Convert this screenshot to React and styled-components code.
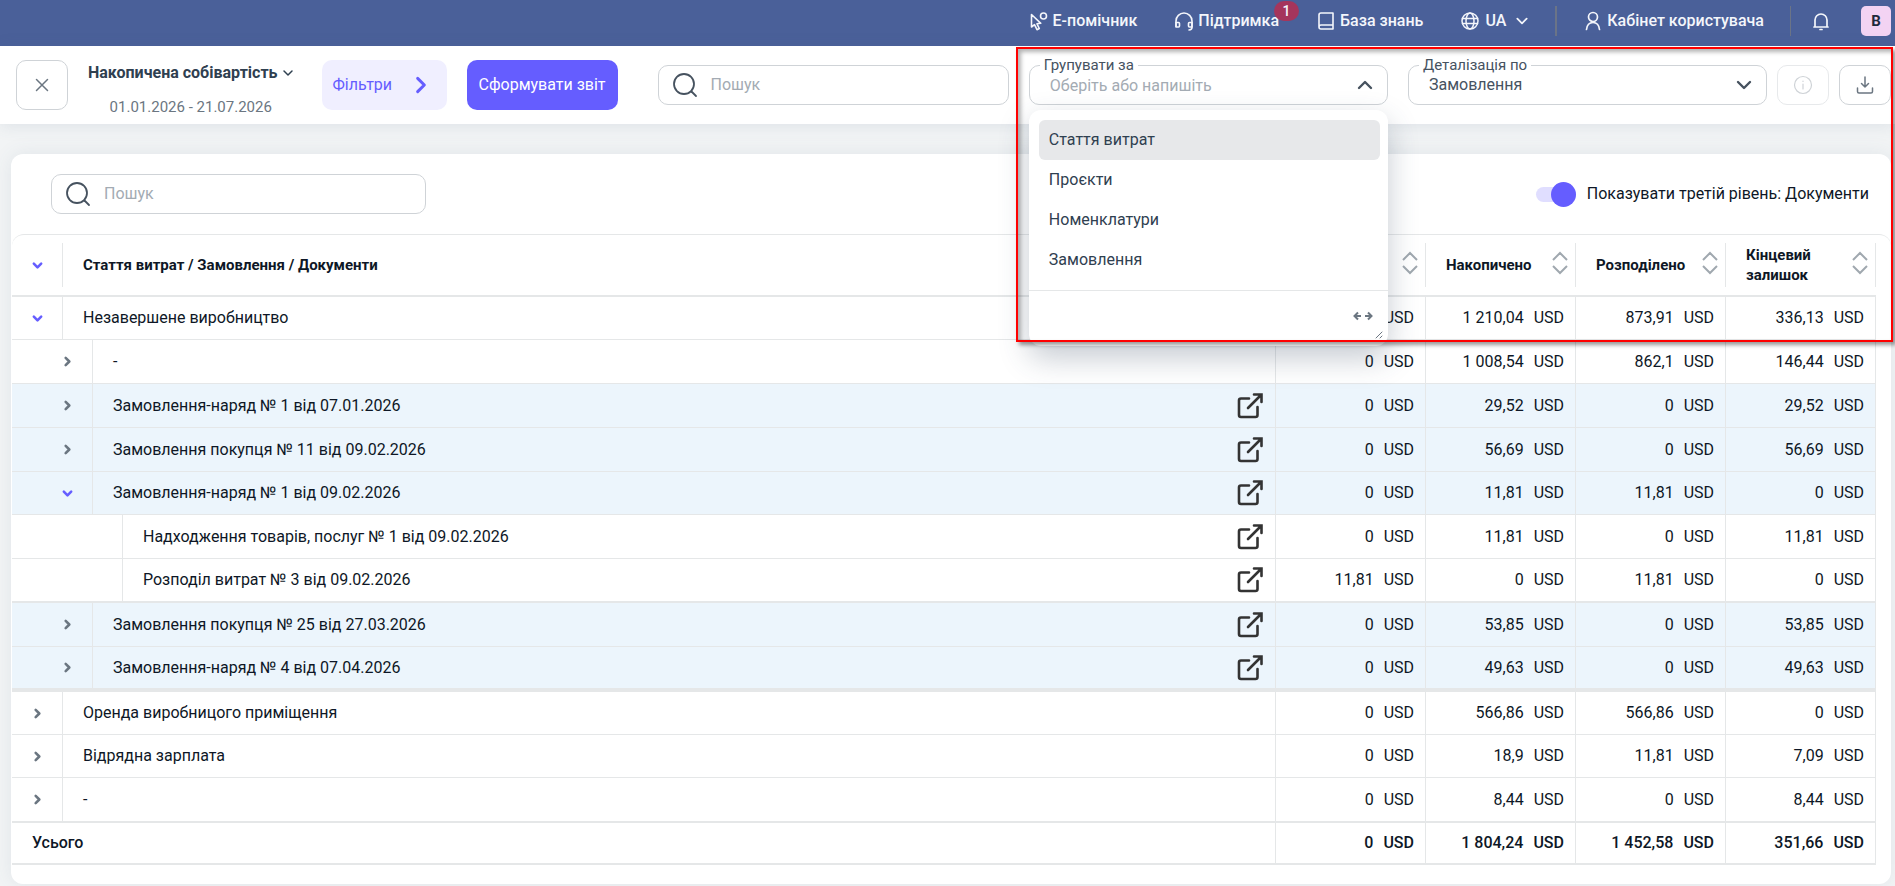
import React, { useState } from "react";
import styled, { createGlobalStyle, css } from "styled-components";

const colors = {
  brand: "#4a6099",
  primary: "#655dff",
  primaryLight: "#f0efff",
  text: "#0e1726",
  slate: "#2f4050",
  muted: "#6b7681",
  placeholder: "#a3abb3",
  border: "#cfd3d7",
  line: "#e5e7e8",
  highlight: "#ecf5fc",
};

const GlobalStyle = createGlobalStyle`
  * {
    box-sizing: border-box;
  }
  html, body, #root {
    min-height: 100vh;
  }
  body {
    margin: 0;
    overflow: hidden;
    background: #f2f4f5;
    color: ${colors.text};
    font: 16px/20px Roboto, "Liberation Sans", sans-serif;
  }
  button, input, select {
    font: inherit;
    color: inherit;
  }
  button {
    padding: 0;
    border: 0;
    background: none;
    cursor: pointer;
  }
  a {
    color: inherit;
    text-decoration: none;
  }
  svg {
    display: block;
    flex: none;
  }
`;

/* ---------- icons ---------- */

const Icon = ({ size = 20, width = 2, box = 24, children }) => (
  <svg
    width={size}
    height={size}
    viewBox={`0 0 ${box} ${box}`}
    fill="none"
    stroke="currentColor"
    strokeWidth={width}
    strokeLinecap="round"
    strokeLinejoin="round"
    aria-hidden="true"
  >
    {children}
  </svg>
);

const CursorIcon = () => (
  <Icon box={20} width={1.6}>
    <path d="M2.500 3.500v12.500l3-2.300 2.500 5 2.300-1.200-2.300-4.700 3.800-.5z" />
    <circle cx="14.500" cy="5" r="3" />
  </Icon>
);

const HeadsetIcon = () => (
  <Icon box={20} width={1.6}>
    <path d="M2 15.500V10a8 8 0 0 1 16 0v6a3 3 0 0 1-3 3" />
    <path d="M2 11.500h2.500a1 1 0 0 1 1 1v2.500a1 1 0 0 1-1 1H2zM18 11.500h-2.500a1 1 0 0 0-1 1v2.500a1 1 0 0 0 1 1H18z" />
  </Icon>
);

const BookIcon = () => (
  <Icon box={20} width={1.6}>
    <path d="M3 16V4a2 2 0 0 1 2-2h12v16H5a2 2 0 0 1-2-2zM3 16a2 2 0 0 1 2-2h12" />
  </Icon>
);

const GlobeIcon = () => (
  <Icon box={20} width={1.5}>
    <circle cx="10" cy="10" r="8" />
    <ellipse cx="10" cy="10" rx="4" ry="8" />
    <path d="M2.500 7.500h15M2.500 12.500h15" />
  </Icon>
);

const UserIcon = () => (
  <Icon box={20} width={1.7}>
    <circle cx="10" cy="6" r="4.500" />
    <path d="M3.500 18.500c.5-4.500 3-7 6.500-7s6 2.500 6.500 7" />
  </Icon>
);

const BellIcon = () => (
  <Icon box={20} width={1.7}>
    <path d="M3 16h14M4 16V9a6 6 0 0 1 12 0v7M9 18.500h2" />
  </Icon>
);

const SearchIcon = () => (
  <Icon size={26} box={26} width={1.8}>
    <circle cx="12" cy="12" r="10" />
    <path d="m19.500 19.500 4.500 4.500" />
  </Icon>
);

const Chevron = ({ dir = "down", size = 12, width = 2 }) => {
  const paths = {
    down: "m2 4 4 4 4-4",
    up: "m2 8 4-4 4 4",
    right: "m4 2 4 4-4 4",
  };
  return (
    <Icon size={size} box={12} width={width}>
      <path d={paths[dir]} />
    </Icon>
  );
};

const CloseIcon = () => (
  <Icon size={14} box={14} width={1.5}>
    <path d="m1.500 1.500 11 11M12.500 1.500l-11 11" />
  </Icon>
);

const InfoIcon = () => (
  <Icon size={20} box={20} width={1.2}>
    <circle cx="10" cy="10" r="8.500" />
    <path d="M10 9v5M10 6v.5" />
  </Icon>
);

const DownloadIcon = () => (
  <Icon size={18} box={18} width={1.5}>
    <path d="M9 1v10M5.500 7.500 9 11l3.500-3.500M1.500 12v3.500a1.500 1.500 0 0 0 1.500 1.500h12a1.500 1.500 0 0 0 1.500-1.500V12" />
  </Icon>
);

const ExternalIcon = () => (
  <Icon size={28} box={28} width={2.6}>
    <path d="M13 6.500H5a2 2 0 0 0-2 2V23a2 2 0 0 0 2 2h14.500a2 2 0 0 0 2-2v-8" />
    <path d="M12 16 24.500 3.500M18 2.500h7.500V10" strokeLinejoin="miter" />
  </Icon>
);

const SortIcon = () => (
  <svg width="16" height="24" viewBox="0 0 16 24" fill="none" stroke="#a0a8af" strokeWidth="2" aria-hidden="true">
    <path d="m1 9 7-7 7 7M1 15l7 7 7-7" />
  </svg>
);

const ResizeIcon = () => (
  <svg width="20" height="10" viewBox="0 0 20 10" fill="none" stroke="currentColor" strokeWidth="2" aria-hidden="true">
    <path d="M8 5H2M5 1.500 1.500 5 5 8.500M12 5h6M15 1.500 18.500 5 15 8.500" />
  </svg>
);

/* ---------- top bar ---------- */

const TopBar = styled.header`
  display: flex;
  align-items: center;
  justify-content: flex-end;
  height: 46px;
  padding: 0 4px 4px 0;
  background: ${colors.brand};
  color: #f4f6fb;
  font-weight: 500;
`;

const NavItem = styled.a`
  position: relative;
  display: flex;
  align-items: center;
  gap: 4px;
  margin-right: ${({ $space }) => $space || 37}px;
`;

const LangButton = styled.button`
  display: flex;
  align-items: center;
  gap: 5px;
  margin-right: 26px;
  font-weight: 500;

  svg:last-child {
    margin-left: 4px;
  }
`;

const NavDivider = styled.span`
  width: ${({ $wide }) => ($wide ? 2 : 1)}px;
  height: 30px;
  margin-right: ${({ $wide }) => ($wide ? 26 : 20)}px;
  background: #6b7487;
`;

const Badge = styled.span`
  position: absolute;
  top: -10px;
  right: -20px;
  width: 25px;
  height: 20px;
  border-radius: 10px;
  background: #a5355c;
  font-size: 14px;
  text-align: center;
`;

const BellButton = styled.button`
  margin-right: 30px;
`;

const Avatar = styled.button`
  width: 30px;
  height: 30px;
  border-radius: 5px;
  background: #f3d3f3;
  color: #1f2a3c;
  font-size: 15px;
  font-weight: 700;
`;

/* ---------- toolbar ---------- */

const Toolbar = styled.div`
  position: relative;
  z-index: 1;
  display: flex;
  align-items: center;
  height: 78px;
  padding: 0 4px 0 16px;
  background: #fff;
  box-shadow: 0 2px 16px rgba(70, 95, 130, 0.12);
`;

const SquareButton = styled.button`
  display: flex;
  align-items: center;
  justify-content: center;
  flex: none;
  width: 52px;
  height: ${({ $tall }) => ($tall ? 50 : 40)}px;
  border: 1px solid ${colors.border};
  border-radius: 10px;
  color: ${colors.muted};

  &:disabled {
    border-color: #e7e9eb;
    color: #cfd3d7;
  }
`;

const ReportInfo = styled.div`
  display: flex;
  flex-direction: column;
  align-items: center;
  gap: 14px;
  margin: 0 28px 0 20px;
  padding-top: 10px;
  color: ${colors.muted};
  font-size: 15px;
`;

const ReportTitle = styled.button`
  display: flex;
  align-items: center;
  gap: 4px;
  color: ${colors.slate};
  font-size: 16px;
  font-weight: 700;
  white-space: nowrap;
`;

const FilterButton = styled.button`
  display: flex;
  align-items: center;
  justify-content: space-between;
  flex: none;
  width: 125px;
  height: 50px;
  margin-right: 20px;
  padding: 0 16px 0 11px;
  border-radius: 10px;
  background: ${colors.primaryLight};
  color: ${colors.primary};
`;

const SubmitButton = styled.button`
  flex: none;
  height: 50px;
  margin-right: 40px;
  padding: 0 12px;
  border-radius: 10px;
  background: ${colors.primary};
  color: #fff;
`;

const SearchBox = styled.label`
  display: flex;
  align-items: center;
  gap: 13px;
  flex: ${({ $width }) => ($width ? "none" : "3 1 0")};
  width: ${({ $width }) => ($width ? `${$width}px` : "auto")};
  min-width: 0;
  height: 40px;
  padding: 0 13px;
  border: 1px solid ${colors.border};
  border-radius: 10px;
  color: #46525f;
`;

const SearchInput = styled.input`
  flex: 1;
  min-width: 0;
  padding: 0;
  border: 0;
  outline: 0;
  background: none;

  &::placeholder {
    color: ${colors.placeholder};
    opacity: 1;
  }
`;

const Options = styled.div`
  position: relative;
  display: flex;
  align-items: center;
  gap: 10px;
  flex: 8 1 0;
  margin-left: 20px;
`;

const Field = styled.div`
  position: relative;
  flex: 1 1 0;
  margin-right: ${({ $last }) => ($last ? 0 : 10)}px;
  color: #46525f;

  > svg {
    position: absolute;
    top: 11px;
    right: 14px;
    pointer-events: none;
  }
`;

const FieldLabel = styled.label`
  position: absolute;
  top: -10px;
  left: 11px;
  padding: 0 4px;
  background: #fff;
  font-size: 15px;
`;

const control = css`
  display: block;
  width: 100%;
  height: 40px;
  padding: 0 40px 0 20px;
  border: 1px solid ${colors.border};
  border-radius: 10px;
  outline: 0;
  background: #fff;
`;

const Combo = styled.input`
  ${control}

  &::placeholder {
    color: ${colors.placeholder};
    opacity: 1;
  }
`;

const Select = styled.select`
  ${control}
  appearance: none;
`;

const Menu = styled.div`
  position: absolute;
  z-index: 2;
  top: 45px;
  left: 0;
  right: 0;
  padding-top: 10px;
  border-radius: 12px;
  background: #fff;
  box-shadow: 0 12px 30px rgba(50, 70, 95, 0.28);
`;

const MenuList = styled.ul`
  margin: 0;
  padding: 0 8px 10px 10px;
  list-style: none;
`;

const MenuItem = styled.li`
  height: 40px;
  padding: 10px;
  border-radius: 6px;
  background: ${({ $active }) => ($active ? "#e7e8ea" : "none")};
  color: ${colors.slate};
`;

const MenuFooter = styled.div`
  position: relative;
  display: flex;
  justify-content: flex-end;
  height: 56px;
  padding: 15px 15px 21px;
  border-top: 1px solid ${colors.line};
  color: ${colors.muted};

  > svg {
    position: absolute;
    right: 5px;
    bottom: 7px;
  }
`;

const Frame = styled.div`
  position: absolute;
  z-index: 3;
  top: -18px;
  right: -2px;
  left: -13px;
  height: 295px;
  border: 2px solid #f00;
  box-shadow: 3px 3px 4px rgba(0, 0, 0, 0.4), inset 3px 3px 4px rgba(0, 0, 0, 0.3);
  pointer-events: none;
`;

/* ---------- report ---------- */

const Card = styled.main`
  margin: 30px 4px 0 11px;
  padding-left: 1px;
  border-radius: 12px;
  background: #fff;
  box-shadow: 0 0 20px rgba(70, 95, 130, 0.1);
`;

const CardTools = styled.div`
  display: flex;
  align-items: center;
  justify-content: space-between;
  height: 80px;
  padding: 0 22px 0 39px;
`;

const Toggle = styled.label`
  display: flex;
  align-items: center;
  gap: 11px;
`;

const Switch = styled.input`
  appearance: none;
  display: flex;
  align-items: center;
  justify-content: flex-end;
  width: 40px;
  height: 15px;
  margin: 0;
  border-radius: 8px;
  background: #e0deff;

  &::before {
    content: "";
    width: 25px;
    height: 25px;
    flex: none;
    border-radius: 50%;
    background: ${colors.primary};
  }

  &:not(:checked) {
    justify-content: flex-start;
  }
`;

const TableWrap = styled.div`
  padding: 0 15px 19px 0;
  border-top: 1px solid ${colors.line};
  border-radius: 12px;
`;

const Table = styled.table`
  display: block;
  text-align: left;

  thead, tbody, tfoot {
    display: block;
  }
`;

const Row = styled.tr`
  display: grid;
  grid-template-columns: minmax(0, 1fr) repeat(4, 150px);
  height: ${({ $height }) => $height || 44}px;
  border-bottom: ${({ $rule }) => $rule || 1}px solid ${colors.line};
  background: ${({ $tinted }) => ($tinted ? colors.highlight : "#fff")};
  font-weight: ${({ $bold }) => ($bold ? 500 : 400)};
`;

const HeadRow = styled(Row)`
  height: 62px;
  padding: 8px 0;
  border-bottom-width: 2px;
  background: none;
`;

const headCell = css`
  display: flex;
  align-items: center;
  padding: 0;
  border-right: 1px solid ${colors.line};
  font-size: 15px;
  font-weight: 700;
`;

const NameHead = styled.th`
  ${headCell}
`;

const ValueHead = styled.th`
  ${headCell}
  justify-content: space-between;
  padding: 0 7px 0 20px;
`;

const SortButton = styled.button`
  padding-bottom: 4px;
`;

const NameCell = styled.td`
  display: flex;
  align-items: center;
  padding: 0;
  border-right: 1px solid ${colors.line};
`;

const ToggleCell = styled.div`
  display: flex;
  align-items: center;
  justify-content: flex-end;
  align-self: stretch;
  width: ${({ $level }) => 51 + $level * 30}px;
  border-right: 1px solid ${colors.line};
`;

const Expander = styled.button`
  display: flex;
  align-items: center;
  justify-content: center;
  width: 50px;
  height: 40px;
  color: ${({ $open }) => ($open ? colors.primary : colors.muted)};
`;

const Name = styled.span`
  flex: 1;
  padding-left: 20px;
`;

const DocLink = styled.a`
  margin-right: 11px;
  color: #333;
`;

const ValueCell = styled.td`
  display: flex;
  align-items: center;
  justify-content: flex-end;
  gap: 10px;
  padding: 0 11px 0 0;
  border-right: 1px solid ${colors.line};
`;

const groupOptions = ["Стаття витрат", "Проєкти", "Номенклатури", "Замовлення"];

const columns = ["Початковий залишок", "Накопичено", "Розподілено", "Кінцевий залишок"];

const groups = [
  [
    { level: 0, open: true, name: "Незавершене виробництво", values: ["0", "1 210,04", "873,91", "336,13"], height: 43 },
    { level: 1, name: "-", values: ["0", "1 008,54", "862,1", "146,44"] },
    { level: 1, doc: true, name: "Замовлення-наряд № 1 від 07.01.2026", values: ["0", "29,52", "0", "29,52"] },
    { level: 1, doc: true, name: "Замовлення покупця № 11 від 09.02.2026", values: ["0", "56,69", "0", "56,69"] },
    { level: 1, doc: true, open: true, name: "Замовлення-наряд № 1 від 09.02.2026", values: ["0", "11,81", "11,81", "0"], height: 43 },
    { level: 2, doc: true, name: "Надходження товарів, послуг № 1 від 09.02.2026", values: ["0", "11,81", "0", "11,81"] },
    { level: 2, doc: true, name: "Розподіл витрат № 3 від 09.02.2026", values: ["11,81", "0", "11,81", "0"], rule: 2 },
    { level: 1, doc: true, name: "Замовлення покупця № 25 від 27.03.2026", values: ["0", "53,85", "0", "53,85"] },
    { level: 1, doc: true, name: "Замовлення-наряд № 4 від 07.04.2026", values: ["0", "49,63", "0", "49,63"], rule: 4, height: 45 },
  ],
  [
    { level: 0, name: "Оренда виробницого приміщення", values: ["0", "566,86", "566,86", "0"], height: 43 },
    { level: 0, name: "Відрядна зарплата", values: ["0", "18,9", "11,81", "7,09"], height: 43 },
    { level: 0, name: "-", values: ["0", "8,44", "0", "8,44"], rule: 2, height: 45 },
  ],
];

const totals = ["0", "1 804,24", "1 452,58", "351,66"];

function Values({ values }) {
  return values.map((value, i) => (
    <ValueCell key={i}>
      <span>{value}</span>
      <span>USD</span>
    </ValueCell>
  ));
}

function ReportRow({ row }) {
  const { level, open, doc, name, values, height, rule } = row;
  return (
    <Row $height={height} $rule={rule} $tinted={doc && level === 1}>
      <NameCell>
        <ToggleCell $level={level}>
          {level < 2 && (
            <Expander $open={open} aria-label="Розгорнути" aria-expanded={!!open}>
              <Chevron dir={open ? "down" : "right"} size={11} width={2.8} />
            </Expander>
          )}
        </ToggleCell>
        <Name>{name}</Name>
        {doc && (
          <DocLink href="#" aria-label={name}>
            <ExternalIcon />
          </DocLink>
        )}
      </NameCell>
      <Values values={values} />
    </Row>
  );
}

function Header() {
  return (
    <TopBar>
      <NavItem href="#">
        <CursorIcon />
        Е-помічник
      </NavItem>
      <NavItem href="#">
        <HeadsetIcon />
        Підтримка
        <Badge>1</Badge>
      </NavItem>
      <NavItem href="#">
        <BookIcon />
        База знань
      </NavItem>
      <LangButton>
        <GlobeIcon />
        UA
        <Chevron width={1.5} size={14} />
      </LangButton>
      <NavDivider $wide />
      <NavItem href="#" $space={26}>
        <UserIcon />
        Кабінет користувача
      </NavItem>
      <NavDivider />
      <BellButton aria-label="Сповіщення">
        <BellIcon />
      </BellButton>
      <Avatar>В</Avatar>
    </TopBar>
  );
}

function GroupField() {
  const [value, setValue] = useState("");
  return (
    <Field>
      <Combo
        id="group"
        placeholder="Оберіть або напишіть"
        value={value}
        onChange={e => setValue(e.target.value)}
      />
      <FieldLabel htmlFor="group">Групувати за</FieldLabel>
      <Chevron dir="up" size={18} width={1.6} />
      <Menu>
        <MenuList role="listbox" aria-label="Групувати за">
          {groupOptions.map((option, i) => (
            <MenuItem
              key={option}
              role="option"
              aria-selected={i === 0}
              $active={i === 0}
              onClick={() => setValue(option)}
            >
              {option}
            </MenuItem>
          ))}
        </MenuList>
        <MenuFooter>
          <button aria-label="Змінити ширину">
            <ResizeIcon />
          </button>
          <Icon size={8} box={8} width={1}>
            <path d="M1 7l6-6M5 7l2-2" />
          </Icon>
        </MenuFooter>
      </Menu>
    </Field>
  );
}

export default function App() {
  const [thirdLevel, setThirdLevel] = useState(true);
  return (
    <>
      <GlobalStyle />
      <Header />
      <Toolbar>
        <SquareButton $tall aria-label="Закрити">
          <CloseIcon />
        </SquareButton>
        <ReportInfo>
          <ReportTitle>
            Накопичена собівартість
            <Chevron size={12} width={1.5} />
          </ReportTitle>
          01.01.2026 - 21.07.2026
        </ReportInfo>
        <FilterButton>
          Фільтри
          <Chevron dir="right" size={20} width={1.8} />
        </FilterButton>
        <SubmitButton>Сформувати звіт</SubmitButton>
        <SearchBox>
          <SearchIcon />
          <SearchInput placeholder="Пошук" aria-label="Пошук" />
        </SearchBox>
        <Options>
          <GroupField />
          <Field $last>
            <Select id="detail" defaultValue="Замовлення">
              <option>Замовлення</option>
              <option>Документи</option>
            </Select>
            <FieldLabel htmlFor="detail">Деталізація по</FieldLabel>
            <Chevron size={18} width={1.6} />
          </Field>
          <SquareButton disabled aria-label="Інформація">
            <InfoIcon />
          </SquareButton>
          <SquareButton aria-label="Завантажити">
            <DownloadIcon />
          </SquareButton>
          <Frame />
        </Options>
      </Toolbar>
      <Card>
        <CardTools>
          <SearchBox $width={375}>
            <SearchIcon />
            <SearchInput placeholder="Пошук" aria-label="Пошук у таблиці" />
          </SearchBox>
          <Toggle>
            <Switch
              type="checkbox"
              role="switch"
              checked={thirdLevel}
              onChange={e => setThirdLevel(e.target.checked)}
            />
            Показувати третій рівень: Документи
          </Toggle>
        </CardTools>
        <TableWrap>
          <Table>
            <thead>
              <HeadRow>
                <NameHead>
                  <ToggleCell $level={0}>
                    <Expander $open aria-label="Розгорнути все">
                      <Chevron size={11} width={2.8} />
                    </Expander>
                  </ToggleCell>
                  <Name>Стаття витрат / Замовлення / Документи</Name>
                </NameHead>
                {columns.map(column => (
                  <ValueHead key={column}>
                    {column}
                    <SortButton aria-label="Сортувати">
                      <SortIcon />
                    </SortButton>
                  </ValueHead>
                ))}
              </HeadRow>
            </thead>
            {groups.map((rows, g) => (
              <tbody key={g}>
                {rows.map((row, i) => (
                  <ReportRow key={i} row={row} />
                ))}
              </tbody>
            ))}
            <tfoot>
              <Row $height={42} $rule={2} $bold>
                <NameCell>
                  <Name>Усього</Name>
                </NameCell>
                <Values values={totals} />
              </Row>
            </tfoot>
          </Table>
        </TableWrap>
      </Card>
    </>
  );
}
